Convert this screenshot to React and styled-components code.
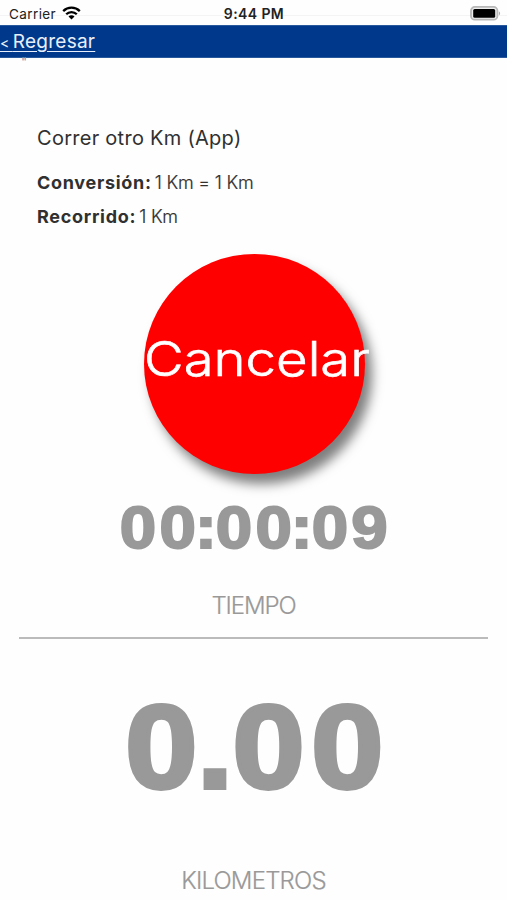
import React, { Component } from "react";
import styled, { createGlobalStyle } from "styled-components";

class App extends Component {
  render() {
    return (
      <Screen>
        <GlobalStyle />
        <StatusBar>
          <Carrier>
            <span>Carrier</span>
            <WifiIcon />
          </Carrier>
          <Clock>9:44 PM</Clock>
          <BatteryIcon />
        </StatusBar>
        <NavBar>
          <BackLink href="#">
            <Arrow>&lt; </Arrow>Regresar
          </BackLink>
        </NavBar>
        <Quote>"</Quote>
        <Details>
          <Title>Correr otro Km (App)</Title>
          <Row>
            <Label>Conversión:</Label>
            <Value>1 Km = 1 Km</Value>
          </Row>
          <Row>
            <Label>Recorrido:</Label>
            <Value>1 Km</Value>
          </Row>
        </Details>
        <CancelButton>
          <CancelText>Cancelar</CancelText>
        </CancelButton>
        <Time>
          0<Tight $spacing="-0.015em">0:</Tight>0
          <Tight $spacing="-0.015em">0:</Tight>09
        </Time>
        <Caption $top="30px" $spacing="-1.1px">
          TIEMPO
        </Caption>
        <Divider />
        <Distance>
          <Tight $spacing="-0.004em">0.</Tight>00
        </Distance>
        <Caption $top="57px" $spacing="-0.8px">
          KILOMETROS
        </Caption>
      </Screen>
    );
  }
}

const WifiIcon = () => (
  <svg width="19" height="14" viewBox="0 0 19 14">
    <g fill="none" stroke="#000" strokeWidth="2.3">
      <path d="M1.2 5.1a11.8 11.8 0 0 1 16.6 0" />
      <path d="M4.2 8.3a7.5 7.5 0 0 1 10.6 0" />
    </g>
    <path d="M9.5 13.6 6.5 10.6a4.2 4.2 0 0 1 6 0z" />
  </svg>
);

const BatteryIcon = () => (
  <svg width="31" height="15" viewBox="0 0 31 15">
    <rect
      x="1"
      y="0.9"
      width="26.4"
      height="12.8"
      rx="3.8"
      fill="#eee"
      stroke="#b8b8b8"
      strokeWidth="1.8"
    />
    <rect x="3.2" y="3" width="22" height="8.8" rx="1.5" />
    <path d="M28.9 5.2c1.6.8 1.6 3.4 0 4.2z" fill="#aaa" />
  </svg>
);

const GlobalStyle = createGlobalStyle`
  * {
    box-sizing: border-box;
  }

  body {
    margin: 0;
    background: #fff;
    font-family: Inter, "Liberation Sans", sans-serif;
  }
`;

const Screen = styled.div`
  width: 507px;
  height: 900px;
  overflow: hidden;
  display: flex;
  flex-direction: column;
  align-items: center;
  background: #fefefe;
`;

const StatusBar = styled.div`
  width: 100%;
  height: 25px;
  padding: 6px 6px 0 9px;
  display: grid;
  grid-template-columns: 1fr auto 1fr;
  align-items: start;
  background: linear-gradient(#fefefe 15px, #f4f4f4 15px, #f4f4f4 16px, #fefefe 16px);
  color: #222;
  font-size: 13.5px;
  line-height: 16px;

  > svg {
    justify-self: end;
  }
`;

const Carrier = styled.div`
  display: flex;
  gap: 6px;
  letter-spacing: 0.4px;
`;

const Clock = styled.div`
  margin-right: 2px;
  font-size: 14px;
  font-weight: 600;
  letter-spacing: 0.4px;
`;

const NavBar = styled.div`
  width: 100%;
  height: 33px;
  background: #00398b;
  border-top: 1px solid #27599c;
  border-bottom: 1px solid #27599c;
`;

const BackLink = styled.a`
  display: block;
  color: #e9effa;
  font-size: 19px;
  letter-spacing: 0.25px;
  line-height: 31px;
  text-underline-offset: 3px;
`;

const Arrow = styled.span`
  font-size: 14px;
  letter-spacing: -0.2px;
`;

const Quote = styled.div`
  width: 100%;
  height: 66px;
  padding-left: 21px;
  color: #7c8cab;
  font-size: 13px;
  line-height: 9px;
`;

const Details = styled.div`
  width: 100%;
  height: 130px;
  padding-left: 37px;
  color: #303030;
`;

const Title = styled.div`
  height: 42px;
  font-size: 20px;
  letter-spacing: 0.27px;
  line-height: 29px;
`;

const Row = styled.div`
  height: 34px;
  display: flex;
  align-items: baseline;
  gap: 3px;
  font-size: 18px;
  line-height: 34px;
`;

const Label = styled.span`
  font-weight: 700;
  letter-spacing: 0.7px;
`;

const Value = styled.span`
  font-weight: 300;
  letter-spacing: -0.2px;
  -webkit-text-stroke: 0.2px #303030;
`;

const CancelButton = styled.button`
  width: 221px;
  height: 220px;
  flex: none;
  display: flex;
  align-items: center;
  justify-content: center;
  padding: 0;
  margin-left: 1px;
  border: none;
  border-radius: 50%;
  background: #fe0000;
  box-shadow: 7px 10px 12px rgba(0, 0, 0, 0.5);
  font-family: inherit;
`;

const CancelText = styled.span`
  flex: none;
  padding: 0 0 10px 6px;
  color: #fff;
  font-size: 48px;
  font-weight: 300;
  line-height: 1;
  white-space: nowrap;
  transform: scaleX(1.135);
  -webkit-text-stroke: 0.7px #fff;
`;

const Figures = styled.div`
  display: flex;
  color: #999;
  font-family: "Liberation Sans", Arial, sans-serif;
  font-weight: 700;
  letter-spacing: 0.05em;
  transform: scaleX(1.1);
  -webkit-text-stroke: 0.034em #999;
`;

const Time = styled(Figures)`
  margin-top: 22px;
  padding-left: 3px;
  height: 64px;
  font-size: 59.5px;
  line-height: 64px;
`;

const Distance = styled(Figures)`
  margin-top: 48px;
  margin-bottom: 1px;
  padding-left: 8px;
  height: 120px;
  font-size: 118px;
  line-height: 120px;
`;

const Tight = styled.span`
  letter-spacing: ${props => props.$spacing};
`;

const Caption = styled.div`
  margin-top: ${props => props.$top};
  color: #999;
  font-size: 24px;
  font-weight: 300;
  letter-spacing: ${props => props.$spacing};
  line-height: 32px;
  -webkit-text-stroke: 0.2px #999;
`;

const Divider = styled.div`
  width: 469px;
  height: 2px;
  flex: none;
  margin-top: 15px;
  background: #bbb;
`;

export default App;
